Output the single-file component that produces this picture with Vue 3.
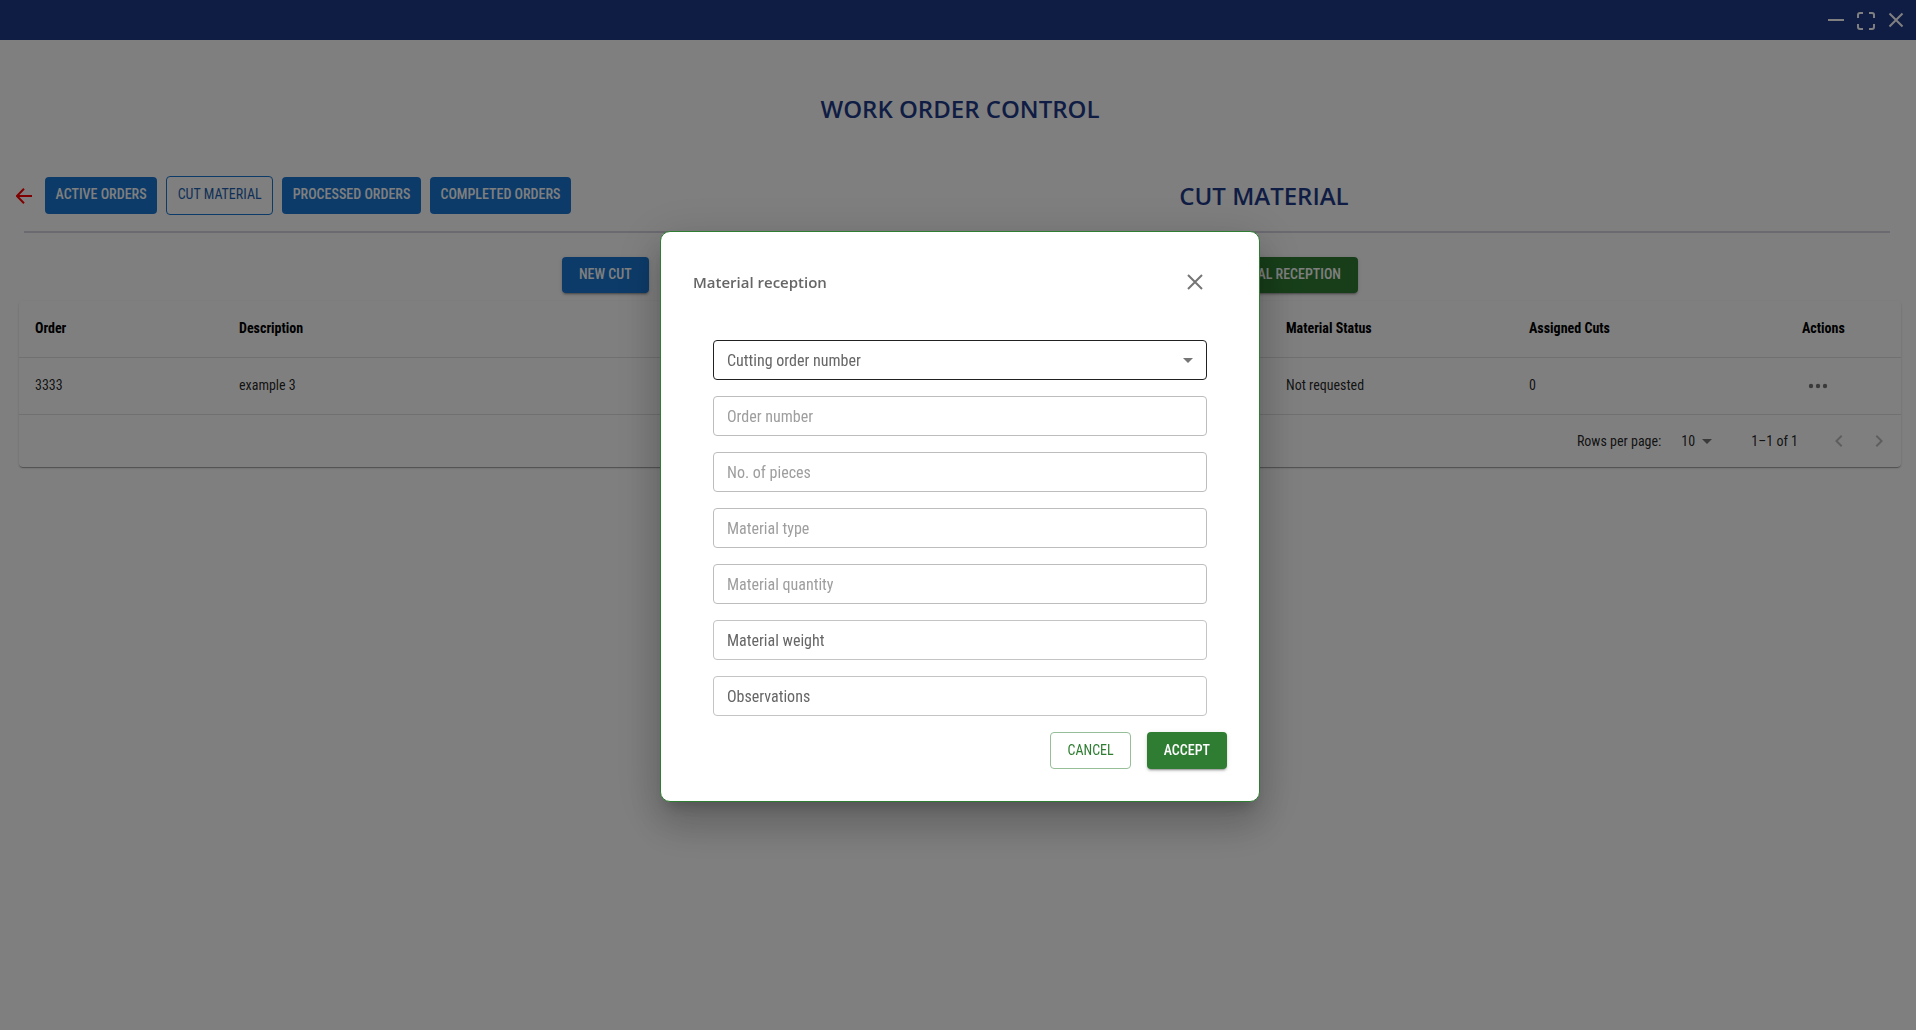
<script setup>
import { ref } from 'vue'

const tabs = [
  { label: 'ACTIVE ORDERS', outlined: false },
  { label: 'CUT MATERIAL', outlined: true },
  { label: 'PROCESSED ORDERS', outlined: false },
  { label: 'COMPLETED ORDERS', outlined: false },
]

const orders = ref([
  { order: '3333', description: 'example 3', status: 'Not requested', cuts: 0 },
])

const fields = [
  { id: 'order-number', label: 'Order number', disabled: true },
  { id: 'pieces', label: 'No. of pieces', disabled: true },
  { id: 'material-type', label: 'Material type', disabled: true },
  { id: 'material-quantity', label: 'Material quantity', disabled: true },
  { id: 'material-weight', label: 'Material weight', disabled: false },
  { id: 'observations', label: 'Observations', disabled: false },
]
</script>

<template>
  <div class="app">
    <header class="titlebar">
      <button class="win" aria-label="Minimize">
        <svg width="16" height="16" viewBox="0 0 16 16"><path d="M0 8h16" /></svg>
      </button>
      <button class="win" aria-label="Full screen">
        <svg width="18" height="20" viewBox="0 0 18 20"><path d="M1 8V5a2 2 0 0 1 2-2h3M12 3h3a2 2 0 0 1 2 2v3M17 14v3a2 2 0 0 1-2 2h-3M6 19H3a2 2 0 0 1-2-2v-3" /></svg>
      </button>
      <button class="win" aria-label="Close window">
        <svg width="16" height="16" viewBox="0 0 16 16"><path d="M1.500 1.500l13 13M14.500 1.500l-13 13" /></svg>
      </button>
    </header>

    <main class="page">
      <h1 class="heading">WORK ORDER CONTROL</h1>

      <div class="toolbar">
        <nav class="tabs">
          <button class="back" aria-label="Back">
            <svg width="16" height="16" viewBox="0 0 16 16"><path d="M16 8H1M8 .7L.9 8 8 15.300" /></svg>
          </button>
          <button v-for="t in tabs" :key="t.label" class="tab" :class="{ outlined: t.outlined }">{{ t.label }}</button>
        </nav>
        <h2 class="heading">CUT MATERIAL</h2>
      </div>
      <hr class="rule" />

      <div class="actions">
        <button class="btn blue">NEW CUT</button>
        <button class="btn green">MATERIAL RECEPTION</button>
      </div>

      <section class="card">
        <table>
          <colgroup>
            <col class="c-order" /><col /><col class="c-status" /><col class="c-cuts" /><col class="c-actions" />
          </colgroup>
          <thead>
            <tr><th>Order</th><th>Description</th><th>Material Status</th><th>Assigned Cuts</th><th>Actions</th></tr>
          </thead>
          <tbody>
            <tr v-for="o in orders" :key="o.order">
              <td>{{ o.order }}</td>
              <td>{{ o.description }}</td>
              <td>{{ o.status }}</td>
              <td>{{ o.cuts }}</td>
              <td class="more-cell">
                <button class="icon-btn" aria-label="More actions">
                  <svg width="24" height="24" viewBox="0 0 24 24"><circle cx="5" cy="12" r="2.200" /><circle cx="12" cy="12" r="2.200" /><circle cx="19" cy="12" r="2.200" /></svg>
                </button>
              </td>
            </tr>
          </tbody>
        </table>
        <footer class="pager">
          <label for="rows">Rows per page:</label>
          <span class="rows">
            <select id="rows"><option>10</option></select>
            <svg width="24" height="24" viewBox="0 0 24 24"><path d="M7 10l5 5 5-5z" /></svg>
          </span>
          <span class="range">1–1 of 1</span>
          <button class="icon-btn" disabled aria-label="Previous page">
            <svg width="24" height="24" viewBox="0 0 24 24"><path d="M15.410 16.590 10.830 12l4.580-4.590L14 6l-6 6 6 6z" /></svg>
          </button>
          <button class="icon-btn" disabled aria-label="Next page">
            <svg width="24" height="24" viewBox="0 0 24 24"><path d="M8.590 16.590 13.170 12 8.590 7.410 10 6l6 6-6 6z" /></svg>
          </button>
        </footer>
      </section>
    </main>

    <div class="backdrop">
      <form class="dialog" role="dialog" aria-labelledby="dialog-title" @submit.prevent>
        <div class="dialog-head">
          <h3 id="dialog-title">Material reception</h3>
          <button type="button" class="close" aria-label="Close">
            <svg width="16" height="16" viewBox="0 0 16 16"><path d="M1 1l14 14M15 1L1 15" /></svg>
          </button>
        </div>
        <div class="fields">
          <div class="select-box">
            <select aria-label="Cutting order number" class="field focus"><option>Cutting order number</option></select>
            <svg width="24" height="24" viewBox="0 0 24 24"><path d="M7 10l5 5 5-5z" /></svg>
          </div>
          <input v-for="f in fields" :id="f.id" :key="f.id" class="field" type="text" :placeholder="f.label" :aria-label="f.label" :disabled="f.disabled" />
        </div>
        <div class="dialog-actions">
          <button type="button" class="btn outline-green">CANCEL</button>
          <button type="submit" class="btn green">ACCEPT</button>
        </div>
      </form>
    </div>
  </div>
</template>

<style>
body {
  margin: 0;
}
</style>

<style scoped>
.app {
  min-height: 100vh;
  background: #fff;
  color: rgba(0, 0, 0, 0.87);
  font-family: "Roboto Condensed", Roboto, sans-serif;
  font-size: 14px;
}
.app * {
  box-sizing: border-box;
}
button,
input,
select {
  font-family: inherit;
  margin: 0;
}
button {
  border: 0;
  padding: 0;
  background: none;
  cursor: pointer;
}
svg {
  display: block;
}
.titlebar {
  display: flex;
  align-items: center;
  justify-content: flex-end;
  gap: 13px;
  height: 40px;
  padding-right: 12px;
  background: #1e3a8a;
}
.win svg,
.back svg,
.close svg {
  fill: none;
  stroke: #fff;
  stroke-width: 2;
}
.heading {
  margin: 0;
  text-align: center;
  color: #1e3a8a;
  font: 600 24px/32px "Open Sans", "Noto Sans", sans-serif;
}
.page > .heading {
  padding: 53px 0 51px 4px;
}
.toolbar {
  display: grid;
  grid-template-columns: 1fr 2fr;
  align-items: center;
  padding: 0 28px 0 16px;
}
.tabs {
  display: flex;
  align-items: center;
  gap: 9px;
  max-width: 555px;
  height: 39px;
  white-space: nowrap;
}
.back {
  margin-right: 4px;
}
.back svg {
  stroke: #f00;
}
.tab {
  flex: 1 1 auto;
  height: 37px;
  padding: 0 8px 3px;
  border-radius: 4px;
  background: #1976d2;
  color: #fff;
  font-size: 14px;
  font-weight: 500;
}
.tab.outlined {
  height: 39px;
  border: 1px solid #1976d2;
  background: none;
  color: #1e5fb0;
  font-weight: 400;
}
.rule {
  height: 2px;
  margin: 16px 26px 0 24px;
  border: 0;
  background: #d4d4e0;
}
.actions {
  display: flex;
  justify-content: space-between;
  width: 800px;
  max-width: 100%;
  margin: 24px auto 8px;
  padding-left: 4px;
}
.btn {
  height: 36px;
  padding: 0 17px 2px;
  border-radius: 4px;
  font-size: 14px;
  font-weight: 500;
  color: #fff;
  box-shadow: 0 3px 1px -2px rgba(0, 0, 0, 0.2), 0 2px 2px rgba(0, 0, 0, 0.14), 0 1px 5px rgba(0, 0, 0, 0.12);
}
.blue {
  background: #1976d2;
}
.green {
  background: #2e7d32;
}
.outline-green {
  padding: 0 16px 2px;
  border: 1px solid #96be98;
  color: #2e7d32;
  font-weight: 400;
  box-shadow: none;
}
.card {
  margin: 0 15px 0 19px;
  border-radius: 4px;
  box-shadow: 0 2px 1px -1px rgba(0, 0, 0, 0.2), 0 1px 1px rgba(0, 0, 0, 0.14), 0 1px 3px rgba(0, 0, 0, 0.12);
}
table {
  width: 100%;
  border-collapse: separate;
  border-spacing: 0;
  table-layout: fixed;
}
.c-order {
  width: 204px;
}
.c-status {
  width: 243px;
}
.c-cuts {
  width: 273px;
}
.c-actions {
  width: 115px;
}
th,
td {
  height: 57px;
  padding: 0 16px 2px;
  border-bottom: 1px solid #e0e0e0;
  text-align: left;
  font-size: 14px;
}
th {
  color: #000;
  font-weight: 700;
}
.more-cell {
  padding: 0 0 0 12px;
}
.icon-btn {
  display: block;
  padding: 8px;
}
.icon-btn svg {
  fill: #757575;
}
.icon-btn:disabled svg {
  fill: #bdbdbd;
}
.pager {
  display: flex;
  align-items: center;
  justify-content: flex-end;
  height: 52px;
  padding: 0 2px 1px 0;
}
.rows {
  display: flex;
  align-items: center;
  margin-left: 20px;
}
.rows select {
  appearance: none;
  width: 14px;
  padding: 0;
  border: 0;
  background: none;
  color: inherit;
  font-size: 14px;
}
.rows svg,
.select-box svg {
  fill: #757575;
}
.range {
  margin: 0 21px 0 32px;
}
.backdrop {
  position: fixed;
  inset: 0;
  display: flex;
  align-items: center;
  justify-content: center;
  padding: 3px 0 0 4px;
  background: rgba(0, 0, 0, 0.5);
}
.dialog {
  width: 600px;
  max-width: 100%;
  padding: 32px;
  border: 1px solid #2e7d32;
  border-radius: 10px;
  background: #fff;
  box-shadow: 0 11px 15px -7px rgba(0, 0, 0, 0.2), 0 24px 38px 3px rgba(0, 0, 0, 0.14), 0 9px 46px 8px rgba(0, 0, 0, 0.12);
}
.dialog-head {
  display: flex;
  align-items: center;
  justify-content: space-between;
  height: 36px;
  padding-right: 24px;
}
h3 {
  margin: 0;
  color: #666;
  font: 600 15px/24px "Open Sans", "Noto Sans", sans-serif;
}
.close svg {
  stroke: #757575;
}
.fields {
  display: flex;
  flex-direction: column;
  gap: 16px;
  padding: 40px 20px 16px;
}
.field {
  width: 100%;
  height: 40px;
  padding: 1px 13px 0;
  border: 1px solid #c4c4c4;
  border-radius: 4px;
  background: #fff;
  color: #666;
  font-size: 16px;
  outline: 0;
}
.field::placeholder {
  color: #666;
  opacity: 1;
}
.field:disabled {
  border-color: #bdbdbd;
}
.field:disabled::placeholder {
  color: #9e9e9e;
}
.field.focus {
  appearance: none;
  border-color: #212121;
}
.select-box {
  position: relative;
  height: 40px;
}
.select-box svg {
  position: absolute;
  top: 8px;
  right: 7px;
  pointer-events: none;
}
.dialog-actions {
  display: flex;
  justify-content: flex-end;
  gap: 16px;
}
.dialog-actions .btn {
  height: 37px;
}
</style>
